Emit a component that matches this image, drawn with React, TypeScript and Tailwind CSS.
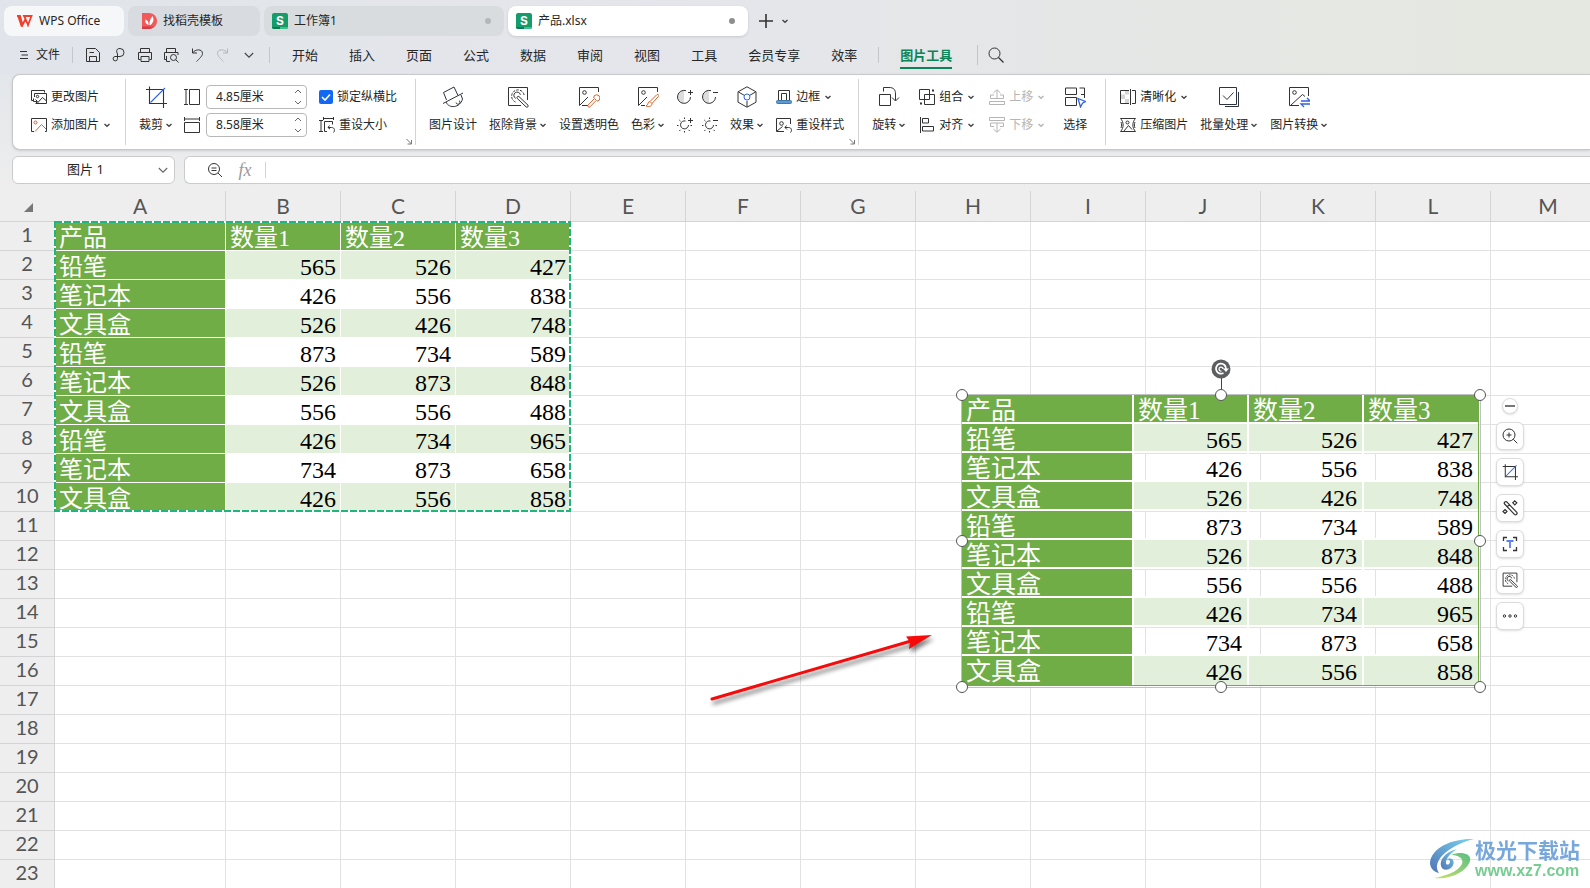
import type { ReactNode } from "react";

const columns = ["A", "B", "C", "D", "E", "F", "G", "H", "I", "J", "K", "L", "M"];

const data = [
  ["产品", "数量1", "数量2", "数量3"],
  ["铅笔", "565", "526", "427"],
  ["笔记本", "426", "556", "838"],
  ["文具盒", "526", "426", "748"],
  ["铅笔", "873", "734", "589"],
  ["笔记本", "526", "873", "848"],
  ["文具盒", "556", "556", "488"],
  ["铅笔", "426", "734", "965"],
  ["笔记本", "734", "873", "658"],
  ["文具盒", "426", "556", "858"],
];

const menus = ["开始", "插入", "页面", "公式", "数据", "审阅", "视图", "工具", "会员专享", "效率"];

function Icon({ size = 16, color = "#333", children }: { size?: number; color?: string; children: ReactNode }) {
  return (
    <svg
      width={size}
      height={size}
      viewBox={`0 0 ${size} ${size}`}
      fill="none"
      stroke={color}
      strokeWidth="1"
      className="shrink-0"
      aria-hidden="true"
    >
      {children}
    </svg>
  );
}

function Chevron({ color = "#444" }: { color?: string }) {
  return (
    <svg width="8" height="8" viewBox="0 0 8 8" fill="none" stroke={color} strokeWidth="1.4" className="shrink-0" aria-hidden="true">
      <path d="M1.5 3 L4 5.3 L6.5 3" />
    </svg>
  );
}

function WideChevron({ color = "#444" }: { color?: string }) {
  return (
    <svg width="10" height="10" viewBox="0 0 10 10" fill="none" stroke={color} strokeWidth="1.1" aria-hidden="true">
      <path d="M0.8 3 L5 7.2 L9.2 3" />
    </svg>
  );
}

function SheetLogo() {
  return (
    <span className="relative flex h-4 w-4 shrink-0 items-center justify-center overflow-hidden rounded-xs bg-[#159c6b] font-['Inter','Liberation_Sans',sans-serif] text-xs leading-none font-bold text-white">
      <span className="absolute bottom-0 left-0 h-0.5 w-2 bg-[#0b7a50]" />
      <span className="absolute right-0 bottom-0 h-0.5 w-2 bg-[#3fbf8d]" />
      S
    </span>
  );
}

function Small({ icon, label, arrow, muted }: { icon: ReactNode; label: string; arrow?: boolean; muted?: boolean }) {
  return (
    <button
      disabled={muted}
      className={`flex h-6 items-center gap-1 whitespace-nowrap ${muted ? "text-[#b5b5b5]" : "text-[#262626]"}`}
    >
      {icon}
      {label}
      {arrow && <Chevron color={muted ? "#b5b5b5" : "#444"} />}
    </button>
  );
}

function Big({ icon, label, arrow }: { icon: ReactNode; label: string; arrow?: boolean }) {
  return (
    <button className="flex flex-col items-center gap-1 whitespace-nowrap text-[#262626]">
      <span className="flex h-6 items-center">{icon}</span>
      <span className="flex h-6 items-center gap-0.5">
        {label}
        {arrow && <Chevron />}
      </span>
    </button>
  );
}

function Stack({ children }: { children: ReactNode }) {
  return <div className="flex flex-col items-start gap-1">{children}</div>;
}

function Group({ children, launcher }: { children: ReactNode; launcher?: boolean }) {
  return (
    <div className="relative flex h-[66px] shrink-0 items-start border-r border-[#d4d4d4] pt-1.5 pr-3.5 pl-[13px]">
      {children}
      {launcher && (
        <button aria-label="更多设置" className="absolute right-0.5 -bottom-0.5">
          <svg width="7" height="7" viewBox="0 0 7 7" fill="none" stroke="#777" className="mb-0.5" aria-hidden="true">
            <path d="M0.5 1 L5.5 6 M5.5 2 V6 H1.5" />
          </svg>
        </button>
      )}
    </div>
  );
}

function SizeField({ label, value, children }: { label: string; value: string; children: ReactNode }) {
  return (
    <label className="flex h-6 items-center gap-1.5">
      {children}
      <span className="flex h-6 w-[101px] items-center rounded border border-[#b8b8b8] bg-white pr-1 pl-[9px]">
        <input aria-label={label} defaultValue={value} className="w-full min-w-0 text-[#262626] outline-none" />
        <svg width="8" height="18" viewBox="0 0 8 18" fill="none" stroke="#666" className="shrink-0" aria-hidden="true">
          <path d="M1 5 L4 2 L7 5 M1 13 L4 16 L7 13" />
        </svg>
      </span>
    </label>
  );
}

const CropIcon = ({ size = 22 }: { size?: number }) => (
  <svg width={size} height={size} viewBox="0 0 22 22" fill="none" stroke="#333" strokeWidth={size < 20 ? 1.4 : 1.1} aria-hidden="true">
    <path d="M4.5 0.5 V17.5 H22 M1 3.5 H18.5 V22" />
    <path d="M5.5 16.5 L20 2" stroke="#2f62e8" />
  </svg>
);

const Wand = ({ size = 22 }: { size?: number }) => (
  <svg width={size} height={size} viewBox="0 0 22 22" fill="none" stroke="#333" strokeWidth={size < 20 ? 1.3 : 1} aria-hidden="true">
    <path d="M14 19.5 H1.5 V1.5 H20.5 V14" />
    <path d="M8.5 16 A6.3 6.3 0 1 1 17.2 9.5" strokeDasharray="2.6 1.2" />
    <path d="M8.8 12.4 a3.3 3.3 0 1 1 4.6 -3.6" />
    <path d="M10.2 12.4 a1.3 1.3 0 0 1 1.8 -1.8 l9 8.6 a1.3 1.3 0 0 1 -1.8 1.8 Z" fill="#fff" />
  </svg>
);

function MenuBar() {
  return (
    <nav className="flex h-[38px] items-center pl-5 text-[#262626]">
      <button className="flex items-center gap-2 text-xs">
        <Icon size={8}>
          <path d="M0 0.5 H7 M1.5 4 H8 M0 7.5 H8" />
        </Icon>
        文件
      </button>
      <span className="mr-3 ml-3 h-4 w-px bg-[#c4c6ca]" />
      <div className="flex items-center gap-2.5">
        <button aria-label="保存">
          <Icon>
            <path d="M1.5 14.5 V1.5 H10.5 L14.5 5.5 V14.5 Z M4.5 14.5 V9.5 H11.5 V14.5 M4.5 5.5 H9" />
          </Icon>
        </button>
        <button aria-label="输出">
          <Icon>
            <path d="M6.5 7 C5 4 5.5 1.5 9 1.5 a4 4 0 0 1 0 8 H4 a2.2 2.2 0 1 0 2.5 2.2 V7" />
          </Icon>
        </button>
        <button aria-label="打印">
          <Icon>
            <path d="M3.5 5.5 V1.5 H12.5 V5.5 M3.5 12.5 H1.5 V5.5 H14.5 V12.5 H12.5 M4 9.5 H12 V14.5 H4 Z" />
          </Icon>
        </button>
        <button aria-label="打印预览">
          <Icon>
            <path d="M3.5 5.5 V1.5 H12.5 V5.5 M3.5 12.5 H1.5 V5.5 H15 V8 M3.5 9 V14.5 H7" />
            <circle cx="10.5" cy="10.5" r="3" />
            <path d="M12.8 12.8 L15.5 15.5" />
          </Icon>
        </button>
        <button aria-label="撤销">
          <Icon>
            <path d="M3.5 1.5 V6 H8 M3.5 6 C6 2 13.5 1.5 13.5 6.5 C13.5 9 10 12 7.5 14.5" />
          </Icon>
        </button>
        <button aria-label="恢复">
          <Icon color="#b4b6ba">
            <path d="M12.5 1.5 V6 H8 M12.5 6 C10 2 2.5 1.5 2.5 6.5 C2.5 9 6 12 8.5 14.5" />
          </Icon>
        </button>
        <button aria-label="更多" className="flex w-4 justify-center">
          <WideChevron />
        </button>
      </div>
      <span className="mr-[22px] ml-3 h-4 w-px bg-[#c4c6ca]" />
      <div className="flex items-center gap-[31px] pt-0.5 text-[13px] whitespace-nowrap">
        {menus.map((m) => (
          <button key={m}>{m}</button>
        ))}
      </div>
      <span className="mr-[21px] ml-[21px] h-4 w-px bg-[#c4c6ca]" />
      <button className="mt-1 border-b-2 border-[#0b8457] pb-0.5 text-[13px] leading-5 font-bold whitespace-nowrap text-[#0b8457]">图片工具</button>
      <span className="mr-2.5 ml-[25px] h-5 w-px bg-[#c4c6ca]" />
      <button aria-label="搜索">
        <Icon>
          <circle cx="6.5" cy="6.5" r="5.5" />
          <path d="M10.5 10.5 L15.5 15.5" strokeWidth="1.3" />
        </Icon>
      </button>
    </nav>
  );
}

function Ribbon() {
  return (
    <section className="ml-3 flex h-[76px] items-start overflow-hidden rounded-l-lg border border-r-0 border-[#c6c8ca] bg-white pt-1 pl-[5px] text-xs shadow-sm">
      <Group>
        <Stack>
          <Small
            label="更改图片"
            icon={
              <Icon>
                <path d="M2.5 11.5 H0.5 V1.5 H13.5 V3.5 M5 14.5 H15.5 V4.5 H3.5 V8 M6 14.5 L11.5 8.5 L15.5 12 M2.5 9.5 V12.5 H6 M4.5 10.5 L6.5 12.5 L4.5 14.5" />
                <circle cx="6.5" cy="7.5" r="1.2" />
              </Icon>
            }
          />
          <Small
            arrow
            label="添加图片"
            icon={
              <Icon>
                <path d="M3 14.5 H0.5 V1.5 H15.5 V14.5 H14" />
                <g stroke="#d9622b">
                  <circle cx="4.5" cy="5.5" r="1.5" />
                  <path d="M4 14.5 L10.5 7.5 L15 12" />
                </g>
              </Icon>
            }
          />
        </Stack>
      </Group>
      <Group launcher>
        <Big arrow label="裁剪" icon={<CropIcon />} />
        <div className="mr-3 ml-[11px] flex flex-col gap-1">
          <SizeField label="高度" value="4.85厘米">
            <Icon>
              <path d="M0 0.5 H4 M2 0.5 V15.5 M0 15.5 H4 M5.5 0.5 H15.5 V15.5 H5.5 Z" />
            </Icon>
          </SizeField>
          <SizeField label="宽度" value="8.58厘米">
            <Icon>
              <path d="M0.5 0 V4 M0.5 2 H15.5 M15.5 0 V4 M0.5 5.5 H15.5 V15.5 H0.5 Z" />
            </Icon>
          </SizeField>
        </div>
        <Stack>
          <label className="mr-1 flex h-6 items-center gap-1 whitespace-nowrap text-[#262626]">
            <span className="relative flex">
              <input type="checkbox" defaultChecked className="h-3.5 w-3.5 appearance-none rounded-xs bg-[#1268f3]" />
              <svg width="14" height="14" viewBox="0 0 14 14" fill="none" stroke="#fff" strokeWidth="1.6" className="pointer-events-none absolute inset-0" aria-hidden="true">
                <path d="M3 7 L6 10 L11 4.5" />
              </svg>
            </span>
            锁定纵横比
          </label>
          <Small
            label="重设大小"
            icon={
              <Icon>
                <path d="M0 3.5 H4 M2 3.5 V14.5 M0 14.5 H4 M4.5 0 V3 M4.5 1.5 H14.5 M14.5 0 V3 M5.5 14.5 V4.5 H13.5 V7.5 M5.5 14.5 H8" />
                <path d="M10.5 8.5 L9 10.5 L11 12 M9 10.5 H12.5 C16 10.5 16 14 14.5 15.5" />
              </Icon>
            }
          />
        </Stack>
      </Group>
      <Group launcher>
        <div className="flex gap-3">
          <Big
            label="图片设计"
            icon={
              <Icon size={22} color="#2d3340">
                <path d="M4.5 14 L1.5 6.5 L12 1 L16 9.5 M1 17.5 L21 7" />
                <path d="M4 16 C7 23 18 22 20.5 13 L19 9 M14 16.5 a2 2 0 1 0 3 -2" />
              </Icon>
            }
          />
          <Big arrow label="抠除背景" icon={<Wand />} />
          <Big
            label="设置透明色"
            icon={
              <Icon size={22}>
                <path d="M10 19.5 H4 M20.5 6 V1.5 H1.5 V19.5 L10 11" />
                <circle cx="6.5" cy="6.5" r="1.8" />
                <g stroke="#d9622b">
                  <path d="M10.2 20.8 a1.2 1.2 0 0 1 0 -1.8 L16.5 12.5 L18.3 14.3 L12 20.8 a1.2 1.2 0 0 1 -1.8 0 Z" />
                  <path d="M15.5 12 a3.2 3.2 0 1 1 3.5 3.2" />
                </g>
              </Icon>
            }
          />
          <Big
            arrow
            label="色彩"
            icon={
              <Icon size={22}>
                <path d="M8 19.5 H4 M20.5 6 V1.5 H1.5 V19.5 L10 11" />
                <circle cx="6.5" cy="6.5" r="1.8" />
                <path stroke="#d9622b" d="M13 15.5 L20 8.5 a1.2 1.2 0 0 1 1.5 1.8 L15 17.5 Z M13 15.5 C10.5 15.5 11.5 19 9 20 C12 21 15 20.5 15 17.5" />
              </Icon>
            }
          />
          <div className="grid grid-cols-[16px_16px] gap-x-[9px] gap-y-1">
            {["提高对比度", "降低对比度"].map((name, i) => (
              <button key={name} aria-label={name} className="flex h-6 items-center">
                <Icon>
                  <path d="M7 1.5 A6.5 6.5 0 0 0 7 14.5 Z" fill="#ddd" stroke="none" />
                  <path d="M9 1.7 A6.5 6.5 0 1 0 13.5 8" />
                  <path d={i === 0 ? "M11 3.5 H16 M13.5 1 V6" : "M11 3.5 H16"} />
                </Icon>
              </button>
            ))}
            {["提高亮度", "降低亮度"].map((name, i) => (
              <button key={name} aria-label={name} className="flex h-6 items-center">
                <Icon>
                  <path d="M8.5 4 A4 4 0 1 0 11.5 8 M7.5 0.5 V2 M7.5 14 V15.5 M0 8.5 H1.5 M13.5 8.5 H15 M2.3 3 L3.5 4.2 M2.3 14 L3.5 12.8 M12.7 14 L11.5 12.8" />
                  <path d={i === 0 ? "M11 3.5 H16 M13.5 1 V6" : "M11 3.5 H16"} />
                </Icon>
              </button>
            ))}
          </div>
          <Big
            arrow
            label="效果"
            icon={
              <Icon size={22}>
                <path d="M11 0.8 L20 5.8 V16.2 L11 21.2 L2 16.2 V5.8 Z M2.5 6 L8 9.2 M19.5 6 L14 9.2 M11 21 V15" />
                <circle cx="11" cy="11" r="3" stroke="#2f62e8" />
              </Icon>
            }
          />
          <Stack>
            <Small
              arrow
              label="边框"
              icon={
                <Icon>
                  <path d="M2.5 11 V1.5 H13.5 V11 M5.5 11 V4.5 H10.5 V11" />
                  <rect x="0.5" y="11.5" width="15" height="3" rx="1" fill="#5b9bd5" stroke="#4178a8" />
                </Icon>
              }
            />
            <Small
              label="重设样式"
              icon={
                <Icon>
                  <path d="M8 14.5 H0.5 V1.5 H14.5 V7 M1 14 L6.5 9.5" />
                  <circle cx="5.5" cy="6.5" r="1.8" />
                  <path d="M10.5 8.5 L9 10.5 L11 12.5 M9 10.5 H12.5 C16 10.5 16 14 14.5 15.5" />
                </Icon>
              }
            />
          </Stack>
        </div>
      </Group>
      <Group>
        <Big
          arrow
          label="旋转"
          icon={
            <Icon size={22}>
              <path d="M1.5 8.5 H12.5 V19.5 H1.5 Z M5.5 5.5 V1.5 H11 C16 1.5 17.5 4 17.5 8 V14.5 M14 11.5 L17.5 15 L21 11.5" />
            </Icon>
          }
        />
        <div className="ml-[13px] flex gap-3.5">
          <Stack>
            <Small
              arrow
              label="组合"
              icon={
                <Icon>
                  <path d="M0.5 0.5 H10.5 V10.5 H0.5 Z M5.5 5.5 H15.5 V15.5 H5.5 Z" />
                  <path d="M13 1.5 H15 M1 14.5 H3" strokeWidth="2" />
                </Icon>
              }
            />
            <Small
              arrow
              label="对齐"
              icon={
                <Icon>
                  <path d="M1.5 0 V16 M3.5 1.5 H9.5 V6 H3.5 Z M3.5 9.5 H14.5 V14 H3.5 Z" />
                </Icon>
              }
            />
          </Stack>
          <Stack>
            <Small
              arrow
              muted
              label="上移"
              icon={
                <Icon color="#b5b5b5">
                  <path d="M0.5 12.5 H15.5 V15.5 H0.5 Z M5 6 H1.5 V9.5 H14.5 V6 H11 M8 10 V1 M4.5 4 L8 0.7 L11.5 4" />
                </Icon>
              }
            />
            <Small
              arrow
              muted
              label="下移"
              icon={
                <Icon color="#b5b5b5">
                  <path d="M0.5 0.5 H15.5 V3.5 H0.5 Z M5 9.5 H1.5 V6 H14.5 V9.5 H11 M8 6 V15 M4.5 12 L8 15.3 L11.5 12" />
                </Icon>
              }
            />
          </Stack>
        </div>
        <div className="mr-1 ml-[18px]">
          <Big
            label="选择"
            icon={
              <Icon size={22}>
                <path d="M1.5 8.5 V2 H12.5 V8.5 Z M15.5 2 H20.5 V12 M1.5 11.5 H12.5 V19.5 H1.5 Z M17 8.5 H20" />
                <path stroke="#2f62e8" strokeWidth="1.3" fill="#fff" d="M14 12.5 L21.5 15.5 L18.5 17.3 L16.5 21 Z" />
              </Icon>
            }
          />
        </div>
      </Group>
      <div className="flex shrink-0 items-start gap-3 pt-1.5 pl-3.5">
        <Stack>
          <Small
            arrow
            label="清晰化"
            icon={
              <Icon>
                <path d="M1 5.5 H5 V10 H1 Z M5 1 H9 V5.5 H5 Z M5 10 H9 V15 H5 Z" fill="#d6d6d6" stroke="none" />
                <path d="M9 14.5 H0.5 V1.5 H9 M10.5 0 V16 M12 1.5 H15.5 V14.5 H12" />
              </Icon>
            }
          />
          <Small
            label="压缩图片"
            icon={
              <Icon>
                <path d="M0.5 1.5 H15.5 M0.5 14.5 H15.5 M0.5 1.5 C4 5 4 11 0.5 14.5 M15.5 1.5 C12 5 12 11 15.5 14.5 M1 5 C1.8 7 1.8 9 1 11 M15 5 C14.2 7 14.2 9 15 11 M4 14 L8.5 8.5 L12 12.5" />
                <circle cx="7.5" cy="5.5" r="1.5" />
              </Icon>
            }
          />
        </Stack>
        <Big
          arrow
          label="批量处理"
          icon={
            <Icon size={22} color="#2d3340">
              <path d="M1.5 1.5 H18.5 V18.5 H1.5 Z M20.5 6 V20.5 H7" />
              <path d="M5 9.5 L9 13.5 L15.5 6.5" />
            </Icon>
          }
        />
        <Big
          arrow
          label="图片转换"
          icon={
            <Icon size={22}>
              <path d="M11 19.5 H1.5 V1.5 H20.5 V10 M3 19 L14.5 8.5 L17 10.5" />
              <circle cx="6.5" cy="6.5" r="1.8" />
              <path stroke="#2f62e8" strokeWidth="1.3" d="M13 15 H22 L19 12 M22 18 H13 L16 21" />
            </Icon>
          }
        />
      </div>
    </section>
  );
}

function FormulaBar() {
  return (
    <div className="mt-1.5 ml-3 flex h-7 gap-[9px]">
      <div className="flex w-[163px] shrink-0 items-center rounded-md border border-[#c9cbcd] bg-white pr-1.5">
        <input aria-label="名称框" defaultValue="图片 1" className="w-full min-w-0 text-center text-[13px] text-[#262626] outline-none" />
        <button aria-label="展开名称">
          <WideChevron color="#666" />
        </button>
      </div>
      <div className="flex flex-1 items-center rounded-l-md border border-r-0 border-[#c9cbcd] bg-white pl-[22px]">
        <button aria-label="缩小">
          <Icon>
            <circle cx="7" cy="7" r="5.5" />
            <path d="M4.5 6 H9.5 M4.5 8.5 H9.5 M11 11 L15 15" />
          </Icon>
        </button>
        <button aria-label="插入函数" className="ml-3.5 w-4 font-['Liberation_Serif',serif] text-lg leading-5 text-[#9a9a9a] italic">
          fx
        </button>
        <span className="ml-3 h-4 w-px bg-[#d4d4d4]" />
        <input aria-label="编辑栏" className="ml-2 min-w-0 flex-1 text-[13px] outline-none" />
      </div>
    </div>
  );
}

function cellStyle(r: number, c: number) {
  if (r >= data.length || c > 3) return "border-[#e2e2e2] bg-white";
  if (r === 0 || c === 0) return "border-white bg-[#70ad47] pt-1 pl-1 text-left text-white";
  return r % 2 === 1 ? "border-white bg-[#e2efda] pt-1 pr-1 text-right text-black" : "border-white bg-white pt-1 pr-1 text-right text-black";
}

function Grid() {
  return (
    <table className="w-[1606px] table-fixed border-separate border-spacing-0 font-['Liberation_Serif','Noto_Sans_CJK_SC',serif] text-2xl leading-6">
      <colgroup>
        <col className="w-[55px]" />
        <col className="w-[171px]" />
        {columns.slice(1).map((c) => (
          <col key={c} className="w-[115px]" />
        ))}
      </colgroup>
      <thead className="font-['Lato',sans-serif] text-[21px] text-[#555]">
        <tr>
          <th aria-label="全选" className="h-[31px] border-b border-[#d4d4d4] bg-[#eee] p-0">
            <svg width="9" height="9" viewBox="0 0 9 9" className="mt-0.5 ml-6" aria-hidden="true">
              <path d="M9 0 V9 H0 Z" fill="#777" />
            </svg>
          </th>
          {columns.map((c) => (
            <th key={c} scope="col" className="h-[31px] border-r border-b border-[#d4d4d4] bg-[#eee] p-0 font-normal">
              {c}
            </th>
          ))}
        </tr>
      </thead>
      <tbody>
        {Array.from({ length: 23 }, (_, r) => (
          <tr key={r}>
            <th scope="row" className="h-[29px] border-r border-b border-[#d4d4d4] bg-[#eee] p-0 pb-1 font-['Lato',sans-serif] text-xl leading-6 font-normal text-[#555]">
              {r + 1}
            </th>
            {columns.map((c, i) => (
              <td key={c} className={`h-[29px] border-r border-b p-0 ${cellStyle(r, i)}`}>
                {data[r]?.[i]}
              </td>
            ))}
          </tr>
        ))}
      </tbody>
    </table>
  );
}

const handles = [
  "-top-1.5 -left-1.5",
  "-top-1.5 left-1/2 -ml-1.5",
  "-top-1.5 -right-1.5",
  "top-1/2 -left-1.5 -mt-1.5",
  "top-1/2 -right-1.5 -mt-1.5",
  "-bottom-1.5 -left-1.5",
  "-bottom-1.5 left-1/2 -ml-1.5",
  "-bottom-1.5 -right-1.5",
];

// The pasted picture of A1:D10, floating over the sheet
function PastedPicture() {
  return (
    <div className="absolute top-[203px] left-[961px] h-[294px] w-[520px] border border-[#bfc1c4]">
      <table className="w-[517px] table-fixed border-separate border-spacing-0 border-r border-b border-[#70ad47] font-['Liberation_Serif','Noto_Sans_CJK_SC',serif] text-2xl leading-5">
        <colgroup>
          <col className="w-[172px]" />
          <col className="w-[115px]" />
          <col className="w-[115px]" />
          <col />
        </colgroup>
        <tbody>
          {data.map((row, r) => (
            <tr key={r}>
              {row.map((value, c) => (
                <td
                  key={c}
                  className={`h-[29px] border-white p-0 pt-1.5 align-top ${r === 9 ? "" : "border-b-2"} ${c === 3 ? "" : "border-r-2"} ${
                    r === 0 || c === 0
                      ? "bg-[#70ad47] pl-1 text-left text-[25px] text-white"
                      : r % 2 === 1
                        ? "bg-[#e2efda] pr-[5px] text-right text-black"
                        : "pr-[5px] text-right text-black"
                  }`}
                >
                  {value}
                </td>
              ))}
            </tr>
          ))}
        </tbody>
      </table>
      <span className="absolute -top-[18px] left-1/2 h-4 w-px bg-[#444]" />
      <svg width="20" height="20" viewBox="0 0 20 20" className="absolute -top-9 left-1/2 -ml-2.5" aria-hidden="true">
        <circle cx="10" cy="10" r="9.5" fill="#5c5e60" />
        <path d="M12.5 14 A5 5 0 1 1 15 10" fill="none" stroke="#fff" strokeWidth="1.8" />
        <path d="M11.8 9.5 H18 L15 13 Z" fill="#fff" />
        <path d="M10.5 12 A2 2 0 1 1 12 10" fill="none" stroke="#fff" strokeWidth="1.2" />
      </svg>
      {handles.map((pos) => (
        <span key={pos} className={`absolute h-3 w-3 rounded-full border border-[#555] bg-white ${pos}`} />
      ))}
    </div>
  );
}

function FloatingTools() {
  const tools = [
    {
      name: "放大",
      icon: (
        <Icon>
          <circle cx="7" cy="7" r="6" />
          <path d="M4.5 7 H9.5 M7 4.5 V9.5 M11.3 11.3 L15.3 15.3" />
        </Icon>
      ),
    },
    { name: "裁剪", icon: <CropIcon size={16} /> },
    {
      name: "美化",
      icon: (
        <Icon>
          <path d="M2.6 4 a1.5 1.5 0 0 1 2.4 -1.8 L14.6 12.2 a1.5 1.5 0 0 1 -2.2 2.2 Z M5.2 6.8 L7.6 4.6" strokeWidth="1.2" />
          <path d="M12.8 0.8 L14.8 2.8 L12.8 4.8 L10.8 2.8 Z M3 9.5 L5 11.5 L3 13.5 L1 11.5 Z" strokeWidth="1.2" />
        </Icon>
      ),
    },
    {
      name: "提取文字",
      icon: (
        <Icon>
          <path d="M1.5 5 V1.5 H5 M11 1.5 H14.5 V5 M14.5 11 V14.5 H11 M5 14.5 H1.5 V11" strokeWidth="1.3" />
          <path d="M4.5 5 H11.5 M8 5 V12" stroke="#5a80ee" strokeWidth="1.8" />
        </Icon>
      ),
    },
    { name: "抠除背景", icon: <Wand size={16} /> },
    {
      name: "更多",
      icon: (
        <Icon>
          <circle cx="2.5" cy="8" r="1.2" />
          <circle cx="8" cy="8" r="1.2" />
          <circle cx="13.5" cy="8" r="1.2" />
        </Icon>
      ),
    },
  ];
  return (
    <div className="absolute top-[207px] left-[1496px] flex w-7 flex-col items-center gap-2">
      <button aria-label="收起" className="flex h-4 w-4 items-center justify-center rounded-full border border-[#ddd] bg-white shadow-sm">
        <span className="h-0.5 w-2.5 bg-[#777]" />
      </button>
      {tools.map((t) => (
        <button key={t.name} aria-label={t.name} className="flex h-7 w-7 items-center justify-center rounded-md border border-[#dcdcdc] bg-white shadow">
          {t.icon}
        </button>
      ))}
    </div>
  );
}

function Watermark() {
  return (
    <div className="absolute right-2.5 bottom-2 flex items-center opacity-90">
      <svg width="46" height="42" viewBox="0 0 46 42" aria-hidden="true">
        <defs>
          <linearGradient id="blueSwirl" x1="0" y1="1" x2="1" y2="0">
            <stop offset="0" stopColor="#3f66ae" />
            <stop offset="1" stopColor="#6bd0ee" />
          </linearGradient>
          <linearGradient id="greenSwirl" x1="0" y1="1" x2="1" y2="0">
            <stop offset="0" stopColor="#c9dd5b" />
            <stop offset="1" stopColor="#48b977" />
          </linearGradient>
        </defs>
        <path fill="url(#blueSwirl)" d="M45 1 C25 0 2 9 1 25 C1 30 5 34 10 35 C3 25 15 9 45 1 Z" />
        <path fill="url(#blueSwirl)" d="M28 11 C15 14 8 25 14 31 C19 34 27 28 24 22 C23 20 19 20 17 22 C21 21 22 24 20 26 C16 29 14 20 28 11 Z" />
        <path fill="url(#greenSwirl)" d="M22 17 C31 13 43 15 41 23 C38 33 22 42 5 40 C16 38 29 34 33 26 C35 20 29 17 22 17 Z" />
      </svg>
      <div className="flex flex-col font-bold">
        <span className="font-['Noto_Sans_CJK_SC',sans-serif] text-[21px] leading-6 text-[#6a9fd8]">极光下载站</span>
        <span className="font-['Liberation_Sans',sans-serif] text-base leading-5 text-[#68c886]">www.xz7.com</span>
      </div>
    </div>
  );
}

export default function App() {
  return (
    <div className="relative flex min-h-screen w-full flex-col overflow-hidden bg-[#eee] font-['Noto_Sans','Noto_Sans_CJK_SC',sans-serif] text-xs">
      <header className="bg-linear-to-r from-[#e1e5eb] via-[#e5e6ea] to-[#e5e8e0]">
        <div className="flex h-9 items-end gap-1 pl-1 text-[#262626]">
          <button className="flex h-[30px] w-[120px] items-center gap-1.5 rounded-lg bg-[#f6f7f9] pl-[13px] whitespace-nowrap">
            <svg width="16" height="12" viewBox="0 0 16 12" fill="none" stroke="#f0402c" strokeWidth="1.8" aria-hidden="true">
              <path d="M0 1 H3 L5.5 10 L8.5 4 L11 10 L14.5 1 H7 L8.5 4 M1.2 1 L4.5 10.8 H6 M10.3 10.8 H11.5" />
            </svg>
            WPS Office
          </button>
          <button className="flex h-[30px] w-[132px] items-center gap-1.5 rounded-lg bg-[#d8dbe0] pl-3.5 whitespace-nowrap">
            <svg width="15" height="16" viewBox="0 0 15 16" aria-hidden="true">
              <path d="M0 0 H7 C12 0 15 4 15 8 C15 12 12 16 7 16 H0 Z" fill="#f05a5a" />
              <path d="M0 13.5 H12 C10.5 15 9 16 7 16 H0 Z" fill="#d93c45" />
              <path d="M7.5 12 C7 8 9 5 10.5 3 C12 6 12 9 8.5 12 Z M6.5 12 C3.5 11 3 8.5 3.5 6.5 C5.5 7.5 7 9 6.5 12 Z" fill="#fff" />
            </svg>
            找稻壳模板
          </button>
          <button className="flex h-[30px] w-[240px] items-center gap-1.5 rounded-lg bg-[#d9dcdf] pr-[13px] pl-2 whitespace-nowrap">
            <SheetLogo />
            工作簿1
            <span className="ml-auto h-1.5 w-1.5 rounded-full bg-[#b4b6b8]" />
          </button>
          <button className="flex h-[30px] w-[240px] items-center gap-1.5 rounded-lg bg-white pr-[13px] pl-2 whitespace-nowrap shadow-sm">
            <SheetLogo />
            产品.xlsx
            <span className="ml-auto h-1.5 w-1.5 rounded-full bg-[#8e8e8e]" />
          </button>
          <div className="ml-[7px] flex h-[30px] items-center gap-2">
            <button aria-label="新建标签">
              <Icon size={14}>
                <path d="M7 0 V14 M0 7 H14" strokeWidth="1.6" />
              </Icon>
            </button>
            <button aria-label="标签列表">
              <Chevron />
            </button>
          </div>
        </div>
        <MenuBar />
      </header>
      <div className="bg-linear-to-b from-[#e3e6ea] to-[#eee] pb-[7px]">
        <Ribbon />
        <FormulaBar />
      </div>
      <main className="relative flex-1">
        <div className="w-full overflow-hidden">
          <Grid />
        </div>
        {/* copy outline round A1:D10 */}
        <svg width="517" height="292" viewBox="0 0 517 292" fill="none" className="absolute top-[30px] left-[54px]" aria-hidden="true">
          <rect x="1" y="1" width="515" height="289" stroke="#fff" strokeWidth="2" />
          <rect x="1" y="1" width="515" height="289" stroke="#1fb57c" strokeWidth="2" strokeDasharray="7 2" />
        </svg>
        <svg width="240" height="84" viewBox="0 0 240 84" className="absolute top-[435px] left-[704px] drop-shadow-[2px_4px_2px_rgba(0,0,0,0.5)]" aria-hidden="true">
          <path d="M8 73 L207 15" stroke="#f60b0b" strokeWidth="3" strokeLinecap="round" />
          <path d="M228 9 L202 10.5 L206 16 L205 23 Z" fill="#f60b0b" />
        </svg>
        <PastedPicture />
        <FloatingTools />
      </main>
      <Watermark />
    </div>
  );
}
